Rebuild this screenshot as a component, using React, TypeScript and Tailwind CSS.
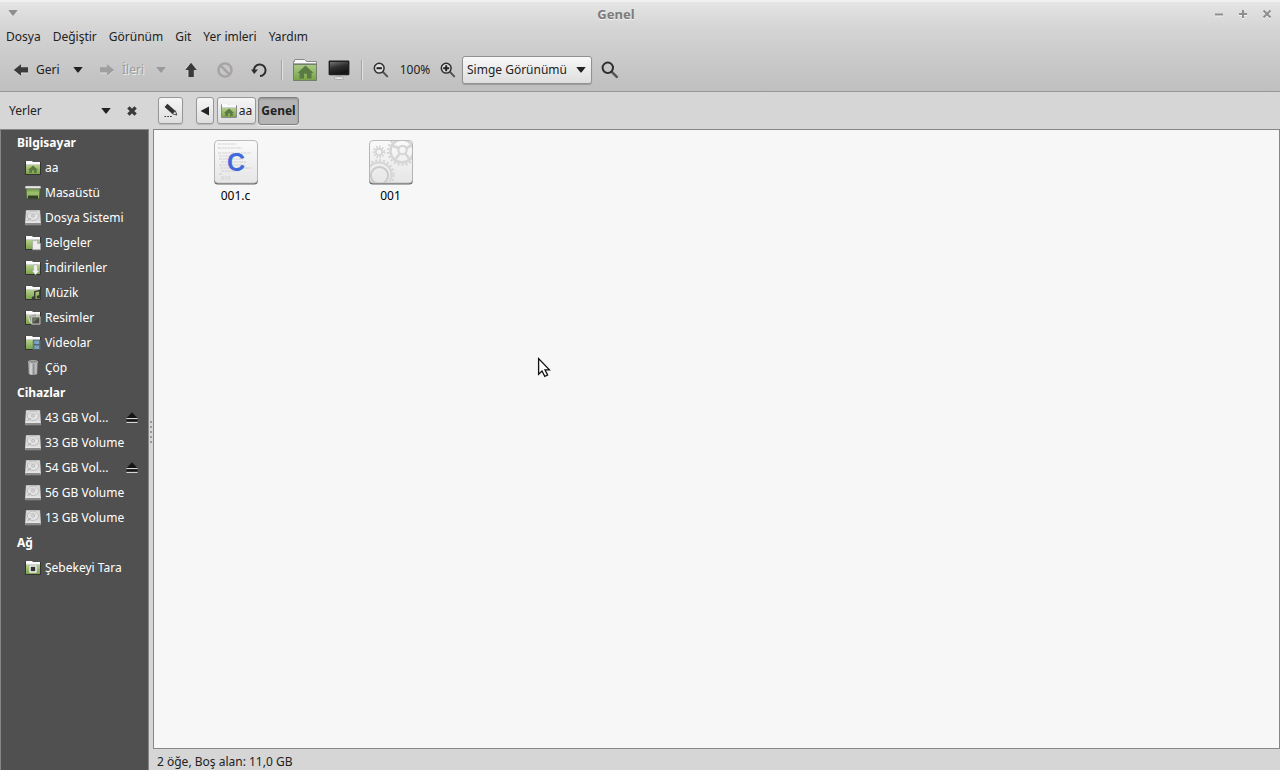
import { useId, useState, type ReactNode } from "react";

function Caret({ className = "" }: { className?: string }) {
  return (
    <svg width="10" height="6" viewBox="0 0 10 6" className={className} aria-hidden="true">
      <path d="M0.3 0h9.4L5.7 5.2a1 1 0 0 1-1.4 0z" fill="currentColor" />
    </svg>
  );
}

type Emblem = "home" | "document" | "download" | "music" | "pictures" | "video" | "network";

function FolderIcon({ emblem, size = 16, outline = "#333" }: { emblem: Emblem; size?: number; outline?: string }) {
  const id = useId();
  return (
    <svg width={size} height={size} viewBox="0 0 16 16" className="shrink-0" aria-hidden="true">
      <defs>
        <linearGradient id={id} x1="0" y1="0" x2="0" y2="1">
          <stop offset="0" stopColor="#b4cf8b" />
          <stop offset="1" stopColor="#7da34b" />
        </linearGradient>
      </defs>
      <path d="M0.5 14.5V2Q0.5 1.5 1 1.5H7L8 2.5H15.5V14.5z" fill={outline} stroke={outline} />
      <path d="M1 4.2V1H7L8 2H15V4.2z" fill="#fafafa" />
      <rect x="1" y="4" width="14" height="1" fill="#d2d2d2" />
      <rect x="1" y="5" width="14" height="9" fill={`url(#${id})`} />
      {emblem === "home" && (
        <path d="M8 5.6L13 10H11.7V13H9.1V10.4H7V13H4.3V10H3z" fill="#5b7a43" />
      )}
      {emblem === "document" && (
        <path d="M7.6 5.6H12.8L15.6 8.4V14.8H7.6z M12.6 5.8V8.6H15.4" fill="#ededed" stroke="#a0a0a0" strokeWidth="0.6" />
      )}
      {emblem === "download" && (
        <path d="M8.7 5H12.4V10.4H14.4L10.6 15L6.8 10.4H8.7z" fill="#f1f1f1" stroke="#999" strokeWidth="0.4" />
      )}
      {emblem === "music" && (
        <g fill="none" stroke="#3b3b3b" strokeWidth="1.4">
          <path d="M9.7 12.6V6.8L14.8 5.4V11.4" />
          <ellipse cx="8.6" cy="13" rx="1.3" ry="1" fill="#3b3b3b" />
          <ellipse cx="13.7" cy="11.9" rx="1.3" ry="1" fill="#3b3b3b" />
        </g>
      )}
      {emblem === "pictures" && (
        <g>
          <rect x="4" y="4.6" width="8" height="7" rx="0.5" fill="#9aa08f" stroke="#ddd" strokeWidth="0.9" transform="rotate(-12 8 8)" />
          <rect x="6.8" y="6.9" width="8.2" height="7.2" fill="#4c5145" stroke="#d4d4d4" strokeWidth="1" />
          <path d="M8.2 12.6L12.8 8.2H8.2z" fill="#737a69" />
        </g>
      )}
      {emblem === "video" && (
        <g>
          <rect x="7.8" y="4.8" width="7.8" height="10" fill="#434b50" />
          <rect x="9.2" y="5.4" width="5" height="3.9" fill="#7ba3bd" />
          <rect x="9.2" y="10.3" width="5" height="3.9" fill="#7ba3bd" />
          <path d="M8.4 5.6v9M15 5.6v9" stroke="#ccd3d6" strokeWidth="0.7" strokeDasharray="1 1" />
        </g>
      )}
      {emblem === "network" && (
        <g>
          <rect x="4" y="5" width="8" height="8" fill="#6a7d55" />
          <rect x="5" y="6" width="6" height="6" fill="#333" stroke="#f0f0f0" strokeWidth="1.6" />
        </g>
      )}
    </svg>
  );
}

function DesktopIcon() {
  const id = useId();
  return (
    <svg width="16" height="16" viewBox="0 0 16 16" className="shrink-0" aria-hidden="true">
      <defs>
        <linearGradient id={id} x1="0" y1="0" x2="0" y2="1">
          <stop offset="0" stopColor="#6d9043" />
          <stop offset="0.4" stopColor="#9cc06b" />
          <stop offset="1" stopColor="#86ab54" />
        </linearGradient>
      </defs>
      <path d="M1 3.5H15L14.4 13.8H1.6z" fill={`url(#${id})`} stroke="#3d4b2b" strokeWidth="0.6" />
      <rect x="3" y="10.6" width="10" height="3.2" fill="#333d28" />
      <rect x="0.2" y="1" width="15.6" height="2.6" rx="0.4" fill="#e8e8e8" stroke="#777" strokeWidth="0.4" />
    </svg>
  );
}

function DriveIcon() {
  return (
    <svg width="16" height="16" viewBox="0 0 16 16" className="shrink-0" aria-hidden="true">
      <path d="M1.2 0.3H14.8L15.7 12V14.8H0.3V12z" fill="#dcdcdc" stroke="#c2c2c2" strokeWidth="0.5" />
      <path d="M0.3 12.6H15.7V15H0.3z" fill="#8a8a8a" />
      <path d="M0.3 11.8H15.7V12.8H0.3z" fill="#f2f2f2" />
      <ellipse cx="8" cy="5.8" rx="5.6" ry="4.7" fill="#e4e4e4" stroke="#b4b4b4" strokeWidth="0.8" />
      <path d="M4.4 4.4Q8 1.6 11.6 4.4" fill="none" stroke="#c4c4c4" strokeWidth="0.8" />
      <ellipse cx="8" cy="5.8" rx="1.7" ry="1.4" fill="#d6d6d6" stroke="#ababab" strokeWidth="0.6" />
      <path d="M2.6 10.6L6 8.2" stroke="#a8a8a8" />
    </svg>
  );
}

function TrashIcon() {
  const id = useId();
  return (
    <svg width="16" height="16" viewBox="0 0 16 16" className="shrink-0" aria-hidden="true">
      <defs>
        <linearGradient id={id}>
          <stop offset="0" stopColor="#8a8a8a" />
          <stop offset="0.3" stopColor="#dcdcdc" />
          <stop offset="0.55" stopColor="#8f8f93" />
          <stop offset="0.8" stopColor="#c5c5c5" />
          <stop offset="1" stopColor="#777" />
        </linearGradient>
      </defs>
      <path d="M3 1.8H13L12.3 14Q8 16.2 3.7 14z" fill={`url(#${id})`} />
      <ellipse cx="8" cy="1.9" rx="4.8" ry="1.3" fill="#858585" stroke="#cdcdcd" strokeWidth="0.7" />
    </svg>
  );
}

function EjectIcon() {
  return (
    <svg width="12" height="12" viewBox="0 0 12 12" aria-hidden="true">
      <path d="M6 0.2L11.6 6.2H0.4z" fill="#161616" />
      <path d="M0.4 6.6H11.6" stroke="#e6e6e6" />
      <path d="M0.5 7.3H11.5V9.8H0.5z" fill="#161616" />
      <path d="M0.4 10.4H11.6" stroke="#e6e6e6" />
    </svg>
  );
}

function ArrowIcon({ className = "", faded = false }: { className?: string; faded?: boolean }) {
  return (
    <svg width="16" height="16" viewBox="0 0 16 16" className={className} aria-hidden="true">
      <path d="M0.8 8.6L8 2.6V5.9H15V11.4H8V14.6z" fill="#ececec" opacity="0.7" />
      <path d="M0.8 8L8 2.2V5.2H15V10.6H8V13.8z" fill={faded ? "#9f9f9f" : "#3a3a3a"} />
    </svg>
  );
}

function Magnifier({ sign }: { sign: "+" | "-" }) {
  return (
    <svg width="16" height="16" viewBox="0 0 16 16" aria-hidden="true">
      <path d="M9.8 9.8L14.2 14.4" stroke="#555" strokeWidth="2" strokeLinecap="round" />
      <circle cx="6.2" cy="6.2" r="4.9" fill="#dedede" stroke="#2e2e2e" strokeWidth="1.5" />
      <path d={sign === "+" ? "M3.2 6.2H9.2M6.2 3.2V9.2" : "M3.5 6.2H8.9"} stroke="#222" strokeWidth="2" />
    </svg>
  );
}

function ToolButton({ label, className, disabled, children }: { label: string; className: string; disabled?: boolean; children: ReactNode }) {
  return (
    <button type="button" aria-label={label} disabled={disabled} className={`flex h-7 shrink-0 items-center justify-center ${className}`}>
      {children}
    </button>
  );
}

function Toolbar() {
  const [view, setView] = useState("icons");
  return (
    <div role="toolbar" className="flex h-[43px] items-center pl-[13px]">
      <button type="button" className="flex h-7 w-12 shrink-0 items-center gap-[7px]">
        <ArrowIcon className="shrink-0" />
        Geri
      </button>
      <ToolButton label="Geri geçmişi" className="w-[34px]">
        <Caret className="text-[#222]" />
      </ToolButton>
      <button type="button" disabled className="ml-1 flex h-7 w-11 shrink-0 items-center gap-[7px] text-[#9b9b9b] [text-shadow:1px_1px_0_#eee]">
        <ArrowIcon faded className="shrink-0 -scale-x-100" />
        İleri
      </button>
      <ToolButton label="İleri geçmişi" disabled className="w-9">
        <Caret className="text-[#999]" />
      </ToolButton>
      <ToolButton label="Yukarı" className="w-6">
        <ArrowIcon className="rotate-90" />
      </ToolButton>
      <ToolButton label="Durdur" disabled className="ml-0.5 w-10">
        <svg width="16" height="16" viewBox="0 0 16 16" aria-hidden="true">
          <circle cx="8" cy="8" r="6.6" fill="none" stroke="#a8a3a3" strokeWidth="2.4" />
          <path d="M3.6 3.6L12.4 12.4" stroke="#a8a3a3" strokeWidth="2.4" />
        </svg>
      </ToolButton>
      <ToolButton label="Yenile" className="w-7">
        <svg width="16" height="16" viewBox="0 0 16 16" aria-hidden="true">
          <path d="M3 9A5.8 5.8 0 1 1 9 14" fill="none" stroke="#2e2e2e" strokeWidth="2" />
          <path d="M0 7.4H7L3.2 12z" fill="#2e2e2e" />
        </svg>
      </ToolButton>
      <div className="ml-2 h-5 w-px shrink-0 bg-[#a3a3a3] shadow-[1px_0_0_#e2e2e2]" />
      <ToolButton label="Ev" className="ml-[7px] w-8">
        <svg width="24" height="24" viewBox="0 0 24 24" aria-hidden="true">
          <defs>
            <linearGradient id="home-green" x1="0" y1="0" x2="0" y2="1">
              <stop offset="0" stopColor="#a9c984" />
              <stop offset="1" stopColor="#79a247" />
            </linearGradient>
          </defs>
          <path d="M0.5 22.5V3.5H1.5V2Q1.5 1.5 2 1.5H11.5L13.5 3.5H23.5V22.5z" fill="#f9f9f9" stroke="#8b8b8b" />
          <path d="M1 5.5H23" stroke="#aaa" />
          <rect x="1" y="7" width="22" height="15.5" fill="url(#home-green)" />
          <path d="M0.5 6.5V22.5H23.5V6.5z" fill="none" stroke="#71806a" />
          <path d="M12.5 7.5L20.5 15H18.5V20.5H14V15.8H11V20.5H6.5V15H4.5z" fill="#5a7b43" />
        </svg>
      </ToolButton>
      <ToolButton label="Bilgisayar" className="ml-0.5 w-8">
        <svg width="22" height="22" viewBox="0 0 22 22" aria-hidden="true">
          <defs>
            <linearGradient id="screen-shine" x1="0" y1="0" x2="0.4" y2="1">
              <stop offset="0" stopColor="#747474" />
              <stop offset="0.5" stopColor="#303030" />
              <stop offset="1" stopColor="#151515" />
            </linearGradient>
          </defs>
          <path d="M8.5 16H13.5L14 19H8z" fill="#bbb" />
          <ellipse cx="11" cy="19.2" rx="5" ry="1.4" fill="#ebebeb" stroke="#929292" strokeWidth="0.7" />
          <rect x="0.6" y="1.6" width="20.8" height="14.6" rx="1.2" fill="#202020" />
          <rect x="2" y="3" width="18" height="11.8" fill="url(#screen-shine)" />
        </svg>
      </ToolButton>
      <div className="ml-1.5 h-5 w-px shrink-0 bg-[#a3a3a3] shadow-[1px_0_0_#e2e2e2]" />
      <ToolButton label="Uzaklaştır" className="ml-[3px] w-8">
        <Magnifier sign="-" />
      </ToolButton>
      <span className="w-9 shrink-0 text-center">100%</span>
      <ToolButton label="Yakınlaştır" className="w-[29px]">
        <Magnifier sign="+" />
      </ToolButton>
      <div className="relative shrink-0">
        <select
          aria-label="Görünüm"
          value={view}
          onChange={(event) => setView(event.target.value)}
          className="block h-7 w-[130px] appearance-none rounded-[3px] border border-[#919191] bg-linear-to-b from-[#f8f8f8] to-[#dedede] pl-1 text-[#222] shadow-[0_1px_1px_#0003]"
        >
          <option value="icons">Simge Görünümü</option>
          <option value="list">Liste Görünümü</option>
        </select>
        <Caret className="pointer-events-none absolute top-[11px] right-1.5 text-[#222]" />
      </div>
      <ToolButton label="Ara" className="ml-0.5 w-8">
        <svg width="18" height="18" viewBox="0 0 18 18" aria-hidden="true">
          <path d="M10.8 10.8L15.8 15.8" stroke="#555" strokeWidth="2.6" strokeLinecap="round" />
          <circle cx="6.8" cy="6.8" r="5.2" fill="none" stroke="#2e2e2e" strokeWidth="2" />
        </svg>
      </ToolButton>
    </div>
  );
}

type Place = { name: string; icon: ReactNode; eject?: boolean };

const sections: { title: string; places: Place[] }[] = [
  {
    title: "Bilgisayar",
    places: [
      { name: "aa", icon: <FolderIcon emblem="home" /> },
      { name: "Masaüstü", icon: <DesktopIcon /> },
      { name: "Dosya Sistemi", icon: <DriveIcon /> },
      { name: "Belgeler", icon: <FolderIcon emblem="document" /> },
      { name: "İndirilenler", icon: <FolderIcon emblem="download" /> },
      { name: "Müzik", icon: <FolderIcon emblem="music" /> },
      { name: "Resimler", icon: <FolderIcon emblem="pictures" /> },
      { name: "Videolar", icon: <FolderIcon emblem="video" /> },
      { name: "Çöp", icon: <TrashIcon /> },
    ],
  },
  {
    title: "Cihazlar",
    places: [
      { name: "43 GB Vol...", icon: <DriveIcon />, eject: true },
      { name: "33 GB Volume", icon: <DriveIcon /> },
      { name: "54 GB Vol...", icon: <DriveIcon />, eject: true },
      { name: "56 GB Volume", icon: <DriveIcon /> },
      { name: "13 GB Volume", icon: <DriveIcon /> },
    ],
  },
  { title: "Ağ", places: [{ name: "Şebekeyi Tara", icon: <FolderIcon emblem="network" /> }] },
];

function Sidebar() {
  return (
    <aside className="flex w-[149px] shrink-0 flex-col">
      <div className="flex h-[37px] items-center pr-[5px] pl-[9px]">
        <span className="flex-1">Yerler</span>
        <button type="button" aria-label="Kenar çubuğu seçenekleri" className="flex h-6 w-6 items-center justify-center">
          <Caret className="text-[#222]" />
        </button>
        <button type="button" aria-label="Kenar çubuğunu kapat" className="ml-0.5 flex h-6 w-6 items-center justify-center">
          <svg width="12" height="12" viewBox="0 0 12 12" aria-hidden="true">
            <path d="M2.4 2.4L9.6 9.6M9.6 2.4L2.4 9.6" stroke="#3a3a3a" strokeWidth="3.4" />
          </svg>
        </button>
      </div>
      <nav aria-label="Yerler" className="flex-1 border border-b-0 border-[#868686] bg-[#505050] text-white">
        {sections.map((section) => (
          <section key={section.title}>
            <h2 className="h-[25px] pl-4 leading-[25px] font-bold">{section.title}</h2>
            <ul>
              {section.places.map((place) => (
                <li key={place.name} className="flex h-[25px] items-center pr-2.5 pl-6">
                  <a href="#" className="flex flex-1 items-center gap-1 whitespace-nowrap">
                    {place.icon}
                    {place.name}
                  </a>
                  {place.eject && (
                    <button type="button" aria-label={`${place.name} çıkar`}>
                      <EjectIcon />
                    </button>
                  )}
                </li>
              ))}
            </ul>
          </section>
        ))}
      </nav>
    </aside>
  );
}

function PathBar() {
  const raised = "rounded-[3px] border border-[#989898] bg-linear-to-b from-[#f6f6f6] to-[#dedede] shadow-[0_1px_1px_#0002]";
  return (
    <div className="flex h-[37px] items-center pl-[5px]">
      <button type="button" aria-label="Konumu düzenle" className={`flex h-[27px] w-[25px] items-center justify-center ${raised}`}>
        <svg width="16" height="16" viewBox="0 0 16 16" aria-hidden="true">
          <path d="M3 2.4L10.8 9.4" stroke="#333" strokeWidth="4.2" />
          <path d="M9.6 10.8L12.4 7.8L13.8 12z" fill="#f3f3f3" stroke="#333" strokeWidth="0.9" />
          <path d="M1.5 13.5H9.5" stroke="#333" strokeWidth="1.2" strokeDasharray="1.6 1.2" />
        </svg>
      </button>
      <button type="button" aria-label="Geri kaydır" className={`ml-[13px] flex h-[27px] w-[18px] items-center justify-center ${raised}`}>
        <svg width="10" height="10" viewBox="0 0 10 10" aria-hidden="true">
          <path d="M0.6 5L9 0.4V9.6z" fill="#222" />
        </svg>
      </button>
      <button type="button" className={`ml-[3px] flex h-[27px] w-[39px] items-center justify-center gap-0.5 ${raised}`}>
        <FolderIcon emblem="home" outline="#8a8a8a" />
        aa
      </button>
      <button type="button" aria-pressed="true" className="ml-0.5 h-7 w-[41px] rounded-[3px] border border-[#828282] bg-[#b5b5b5] text-center font-bold shadow-[inset_0_1px_2px_#0003,0_1px_0_#eee]">
        Genel
      </button>
    </div>
  );
}

const codeLines = [
  [4, 5, 18], [4, 9, 24], [4, 14, 33], [5, 17, 12], [5, 20, 24], [7, 23, 26],
  [5, 26, 26], [6, 29, 32], [7, 32, 18], [5, 35, 3], [7, 38, 10], [7, 40, 10],
];

function FileTile({ gradient, children }: { gradient: string; children: ReactNode }) {
  return (
    <svg width="46" height="46" viewBox="0 0 46 46" aria-hidden="true">
      <defs>
        <linearGradient id={gradient} x1="0" y1="0" x2="0" y2="1">
          <stop offset="0" stopColor="#fafafa" />
          <stop offset="1" stopColor="#e6e6e6" />
        </linearGradient>
        <clipPath id={`${gradient}-clip`}>
          <rect x="2" y="2" width="42" height="42" rx="3" />
        </clipPath>
      </defs>
      <rect x="1.2" y="3" width="43.6" height="42.4" rx="3.5" fill="#666" />
      <rect x="1.5" y="1.5" width="43" height="42.6" rx="3.5" fill={`url(#${gradient})`} stroke="#b4b4b4" strokeWidth="0.9" />
      <g clipPath={`url(#${gradient}-clip)`}>{children}</g>
    </svg>
  );
}

function SourceIcon() {
  return (
    <FileTile gradient="tile-source">
      {codeLines.map(([x, y, w]) => (
        <path key={y} d={`M${x + 1} ${y}h${w}`} stroke="#cfcfcf" strokeWidth="1" strokeDasharray="3 0.8 2 0.6" />
      ))}
      <text x="23" y="32" textAnchor="middle" fill="#4169dc" className="font-['Liberation_Sans',sans-serif] text-[25px] font-bold">
        C
      </text>
    </FileTile>
  );
}

function Gear({ x, y, r, width, tooth }: { x: number; y: number; r: number; width: number; tooth: number }) {
  return (
    <g fill="none" stroke="#d6d6d6">
      <circle cx={x} cy={y} r={r} strokeWidth={width} />
      <circle cx={x} cy={y} r={r + width / 2 + 1} strokeWidth="2.6" strokeDasharray={`${tooth} ${tooth}`} />
    </g>
  );
}

function BinaryIcon() {
  return (
    <FileTile gradient="tile-binary">
      <Gear x={11} y={13} r={3.2} width={2} tooth={1.5} />
      <Gear x={34} y={12} r={11.5} width={2.6} tooth={2} />
      <circle cx="34.5" cy="11" r="4.2" fill="none" stroke="#d6d6d6" strokeWidth="2.2" />
      <path d="M32 14L27 21M37 14L42 21M30.5 9L23 6M38.5 9L44 6" stroke="#d6d6d6" strokeWidth="2.6" />
      <Gear x={11} y={36} r={12.5} width={2} tooth={2} />
      <circle cx="11.5" cy="36.5" r="8.6" fill="none" stroke="#cbcbcb" strokeWidth="2" />
    </FileTile>
  );
}

function MousePointer() {
  return (
    <svg width="14" height="22" viewBox="0 0 14 22" className="pointer-events-none absolute top-[357px] left-[537px]" aria-hidden="true">
      <path d="M1.6 1.6V17.2L5 14L7.8 19.4L10.6 18L8 12.8H12.4z" fill="#fff" stroke="#111" strokeWidth="1.3" />
    </svg>
  );
}

const menus = ["Dosya", "Değiştir", "Görünüm", "Git", "Yer imleri", "Yardım"];

export default function App() {
  return (
    <div className="relative flex min-h-screen flex-col bg-[#d6d6d6] font-['Noto_Sans',sans-serif] text-[12px] leading-4 text-[#222]">
      <header className="border-b border-[#979797] bg-linear-to-b from-[#e6e6e6] via-[#d5d5d5] via-30% to-[#bfbfbf]">
        <div className="flex h-6 items-center border-t-2 border-[#f1f1f1] px-[7px] text-[#7c7c7c]">
          <button type="button" aria-label="Pencere menüsü" className="flex h-4 w-3 items-center justify-center">
            <Caret className="text-[#8e8e8e]" />
          </button>
          <h1 className="flex-1 pt-0.5 text-center text-[13px] font-bold [text-shadow:0_1px_0_#f0f0f0]">Genel</h1>
          <div className="flex gap-3 pt-0.5">
            {[
              ["Simge durumuna küçült", "M2 6.5H10"],
              ["Ekranı kapla", "M2 6H10M6 2V10"],
              ["Kapat", "M2.5 2.5L9.5 9.5M9.5 2.5L2.5 9.5"],
            ].map(([label, path]) => (
              <button key={label} type="button" aria-label={label}>
                <svg width="12" height="12" viewBox="0 0 12 12" aria-hidden="true">
                  <path d={path} stroke="#f5f5f5" strokeWidth="2" transform="translate(0 1)" />
                  <path d={path} stroke="#8e8e8e" strokeWidth="2" />
                </svg>
              </button>
            ))}
          </div>
        </div>
        <div role="menubar" className="flex h-6 items-center gap-3 px-1.5 pt-0.5">
          {menus.map((menu) => (
            <button key={menu} type="button" role="menuitem">
              {menu}
            </button>
          ))}
        </div>
        <Toolbar />
      </header>
      <div className="flex flex-1">
        <Sidebar />
        <div role="separator" aria-orientation="vertical" className="flex w-1 shrink-0 flex-col items-center justify-center gap-[3px] pt-0.5">
          {[0, 1, 2, 3, 4].map((dot) => (
            <span key={dot} className="h-0.5 w-0.5 bg-[#999]" />
          ))}
        </div>
        <main className="flex min-w-0 flex-1 flex-col">
          <PathBar />
          <ul className="flex flex-1 flex-wrap content-start border border-[#868686] bg-[#f7f7f7] pt-[9px] pl-1 text-black">
            {[
              { name: "001.c", icon: <SourceIcon /> },
              { name: "001", icon: <BinaryIcon /> },
            ].map((file) => (
              <li key={file.name} className="w-[155px]">
                <a href="#" className="flex flex-col items-center gap-[3px]">
                  {file.icon}
                  {file.name}
                </a>
              </li>
            ))}
          </ul>
          <footer className="h-[21px] pt-[5px] pl-1">2 öğe, Boş alan: 11,0 GB</footer>
        </main>
      </div>
      <MousePointer />
    </div>
  );
}
